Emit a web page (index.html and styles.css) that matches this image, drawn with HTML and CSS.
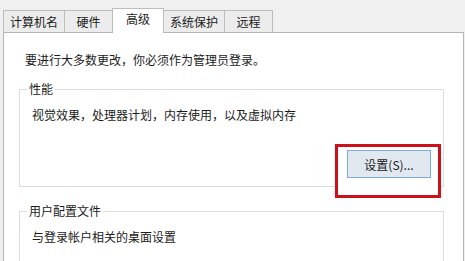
FILE: index.html
```html
<!DOCTYPE html>
<html lang="zh-CN">

<head>
  <meta charset="UTF-8">
  <meta name="viewport" content="width=device-width, initial-scale=1.0">
  <title>系统属性 - 高级</title>
  <link rel="stylesheet" href="styles.css">
</head>

<body>
  <div class="tabs">
    <div class="tab">计算机名</div>
    <div class="tab">硬件</div>
    <div class="tab active">高级</div>
    <div class="tab">系统保护</div>
    <div class="tab">远程</div>
  </div>

  <div class="panel">
    <p class="intro">要进行大多数更改，你必须作为管理员登录。</p>

    <fieldset class="group">
      <legend>性能</legend>
      <p class="group-text">视觉效果，处理器计划，内存使用，以及虚拟内存</p>
      <div class="button-row">
        <div class="highlight-wrap">
          <span class="highlight"></span>
          <button class="button">设置(S)...</button>
        </div>
      </div>
    </fieldset>

    <fieldset class="group group-profile">
      <legend>用户配置文件</legend>
      <p class="group-text">与登录帐户相关的桌面设置</p>
    </fieldset>
  </div>
</body>

</html>
```

FILE: styles.css
```css
body {
  margin: 0;
  background: #f0f0f0;
  font-family: "Noto Sans CJK SC", "Noto Sans", sans-serif;
  font-size: 12px;
  color: #1b1b1b;
  overflow: hidden;
}

.tabs {
  display: flex;
  align-items: flex-end;
  margin-top: 8px;
  padding-left: 3px;
  height: 24px;
}

.tab {
  box-sizing: border-box;
  height: 22px;
  min-width: 49px;
  padding: 0 6px;
  margin-right: -1px;
  border: 1px solid #bdbdbd;
  border-bottom: none;
  background: #ececec;
  line-height: 21px;
  text-align: center;
}

.tab.active {
  position: relative;
  z-index: 1;
  height: 25px;
  min-width: 52px;
  margin-bottom: -1px;
  background: #fff;
  line-height: 20px;
}

.panel {
  box-sizing: border-box;
  width: 461px;
  height: 240px;
  margin-left: 3px;
  padding: 19px 19px 0 15px;
  background: #fff;
  border: 1px solid #b4b4b4;
}

.intro {
  margin: 0 0 13px 6px;
  line-height: 16px;
}

.group {
  margin: 0;
  padding: 0 12px 0 6px;
  border: 1px solid #dcdcdc;
}

.group legend {
  padding: 0 2px;
  margin-left: 1px;
  line-height: 16px;
}

.group-text {
  margin: 10px 0 0 6px;
  line-height: 16px;
}

.group-profile {
  margin-top: 16px;
  height: 60px;
}

.button-row {
  display: flex;
  justify-content: flex-end;
  margin: 27px 0 8px;
}

.highlight-wrap {
  position: relative;
}

.highlight {
  position: absolute;
  left: -12px;
  top: -6px;
  width: 106px;
  height: 54px;
  box-sizing: border-box;
  border: 3px solid #cc111b;
  background: #fff;
}

.button {
  position: relative;
  box-sizing: border-box;
  width: 84px;
  height: 28px;
  margin: 0;
  border: 1px solid #7ea9dc;
  background: #e2e8f0;
  font-family: inherit;
  font-size: 12px;
  color: #1b1b1b;
}
```
